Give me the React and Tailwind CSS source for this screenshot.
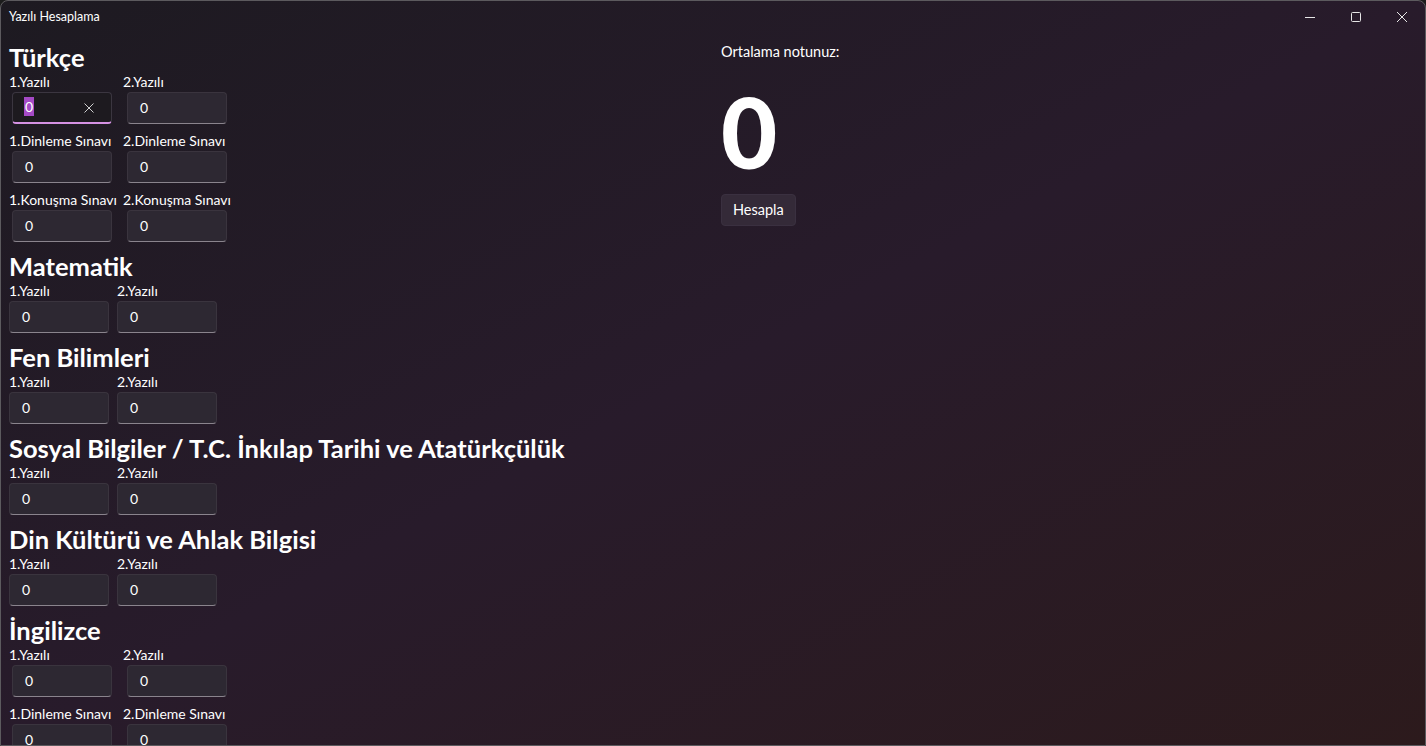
import React from 'react';

// Grade calculator window: subjects on the left, average on the right
const subjects = [
  {
    name: 'Türkçe',
    wide: true,
    fields: [
      ['1.Yazılı', '2.Yazılı'],
      ['1.Dinleme Sınavı', '2.Dinleme Sınavı'],
      ['1.Konuşma Sınavı', '2.Konuşma Sınavı'],
    ],
  },
  { name: 'Matematik', fields: [['1.Yazılı', '2.Yazılı']] },
  { name: 'Fen Bilimleri', fields: [['1.Yazılı', '2.Yazılı']] },
  { name: 'Sosyal Bilgiler / T.C. İnkılap Tarihi ve Atatürkçülük', fields: [['1.Yazılı', '2.Yazılı']] },
  { name: 'Din Kültürü ve Ahlak Bilgisi', fields: [['1.Yazılı', '2.Yazılı']] },
  {
    name: 'İngilizce',
    wide: true,
    fields: [
      ['1.Yazılı', '2.Yazılı'],
      ['1.Dinleme Sınavı', '2.Dinleme Sınavı'],
      ['1.Konuşma Sınavı', '2.Konuşma Sınavı'],
    ],
  },
];

const font = { fontFamily: 'Lato, "Noto Sans", sans-serif' };

function ScoreBox({ focused }) {
  if (focused) {
    return (
      <div className="relative flex h-8 w-[100px] items-center rounded-[4px] border border-[#3b3640] border-b-2 border-b-[#d591e3] bg-[#1d1a1f] pl-[11px] pr-3">
        <span className="mb-[2px] bg-[#a54ac6] px-[1px] text-[14px] leading-[19px] text-white">0</span>
        <svg className="ml-auto mr-[5px] h-[10px] w-[10px]" viewBox="0 0 10 10" stroke="#cfcfcf" strokeWidth="1">
          <path d="M0.5 0.5l9 9M9.5 0.5l-9 9" />
        </svg>
      </div>
    );
  }
  return (
    <div className="flex h-8 w-[100px] items-center rounded-[4px] border border-[#3a343e] border-b-[#8a848d] bg-[#2d2832] pb-[2px] pl-3 text-[14px] text-white">
      0
    </div>
  );
}

function Subject({ subject, first }) {
  const cols = subject.wide ? 'grid-cols-[106px_108px]' : 'grid-cols-[100px_100px]';
  return (
    <section className={first ? '' : 'mt-2'}>
      <h2 className="h-8 text-[25.5px] font-bold leading-8 text-white">{subject.name}</h2>
      <div className="flex flex-col gap-2">
        {subject.fields.map((row, r) => (
          <div key={r} className={`grid ${cols} gap-x-2`}>
            {row.map((label, c) => (
              <div key={label} className="flex flex-col">
                <span className="h-[19px] whitespace-nowrap text-[14px] leading-[18px] text-white">{label}</span>
                <div className={subject.wide ? 'self-center' : ''}>
                  <ScoreBox focused={first && r === 0 && c === 0} />
                </div>
              </div>
            ))}
          </div>
        ))}
      </div>
    </section>
  );
}

export default function App() {
  return (
    <div className="h-[746px] w-[1426px] overflow-hidden bg-[#1c1c1c]" style={font}>
      <div className="flex h-full flex-col overflow-hidden rounded-t-lg border border-[#5c5a5e] bg-linear-to-br from-[#1d1a21] via-[#281b2b] to-[#2c1a1c]">
        {/* title bar */}
        <div className="flex h-8 shrink-0 items-center">
          <span className="pl-2 text-[12.5px] text-white">Yazılı Hesaplama</span>
          <div className="ml-auto flex h-full">
            <button className="flex h-full w-[46px] items-center justify-center">
              <svg className="h-[10px] w-[10px]" viewBox="0 0 10 10" stroke="#e6e6e6" strokeWidth="1">
                <path d="M0 5.5h10" />
              </svg>
            </button>
            <button className="flex h-full w-[46px] items-center justify-center">
              <svg className="h-[10px] w-[10px]" viewBox="0 0 10 10" fill="none" stroke="#e6e6e6" strokeWidth="1">
                <rect x="0.5" y="0.5" width="9" height="9" rx="1" />
              </svg>
            </button>
            <button className="flex h-full w-[46px] items-center justify-center">
              <svg className="h-[10px] w-[10px]" viewBox="0 0 10 10" stroke="#e6e6e6" strokeWidth="1">
                <path d="M0 0l10 10M10 0L0 10" />
              </svg>
            </button>
          </div>
        </div>

        {/* content */}
        <div className="grid min-h-0 flex-1 grid-cols-2 pt-2">
          <div className="pl-2">
            {subjects.map((s, i) => (
              <Subject key={s.name} subject={s} first={i === 0} />
            ))}
          </div>
          <div className="pl-2 pt-px">
            <p className="h-[19px] text-[14.5px] leading-[19px] text-white">Ortalama notunuz:</p>
            <div className="mb-[14px] mt-[22px] h-[97px] text-[97px] font-black leading-[97px] text-white">0</div>
            <button className="h-8 rounded-[4px] border border-[#3a3040] bg-[#342a38] px-[11px] text-[14.5px] text-white">
              Hesapla
            </button>
          </div>
        </div>
      </div>
    </div>
  );
}
